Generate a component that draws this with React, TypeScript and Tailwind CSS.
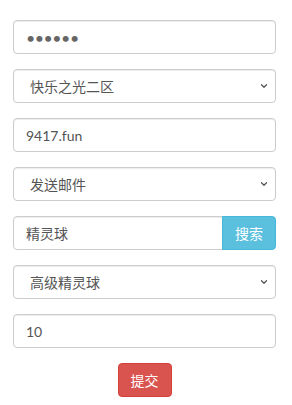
import { ChevronDown } from 'lucide-react'

const inputCls =
  "block w-full h-[34px] px-[12px] text-[14px] text-[#555] bg-white border border-[#ccc] rounded-[4px] shadow-[inset_0_1px_1px_rgba(0,0,0,0.075)] outline-none font-['Lato','Noto_Sans_CJK_SC',sans-serif]"

function TextField({ value, type = 'text', extra = '' }: { value: string; type?: string; extra?: string }) {
  return <input className={`${inputCls} ${extra}`} type={type} defaultValue={value} />
}

function SelectField({ options }: { options: string[] }) {
  return (
    <div className="relative">
      <select className={`${inputCls} appearance-none pl-[16px] pr-[28px]`} defaultValue={options[0]}>
        {options.map(o => (
          <option key={o}>{o}</option>
        ))}
      </select>
      <ChevronDown
        className="absolute right-[7px] top-[12px] w-[10px] h-[10px] text-[#555] pointer-events-none"
        strokeWidth={3}
      />
    </div>
  )
}

export default function App() {
  return (
    <div className="w-[292px] h-[405px] bg-white font-['Lato','Noto_Sans_CJK_SC',sans-serif]">
      <form className="ml-[13px] w-[263px] pt-[20px] flex flex-col gap-[15px]">
        <TextField type="password" value="123456" extra="text-[16px] tracking-[-0.5px] text-[#666]" />
        <SelectField options={['快乐之光二区', '快乐之光一区']} />
        <TextField value="9417.fun" />
        <SelectField options={['发送邮件', '发送道具']} />

        {/* 搜索 */}
        <div className="flex">
          <input className={`${inputCls} flex-1 min-w-0 rounded-r-none`} defaultValue="精灵球" />
          <button
            type="button"
            className="w-[54px] h-[34px] shrink-0 -ml-px bg-[#5bc0de] border border-[#46b8da] text-white text-[14px] rounded-r-[4px]"
          >
            搜索
          </button>
        </div>

        <SelectField options={['高级精灵球', '精灵球']} />
        <TextField value="10" />

        <div className="flex justify-center">
          <button
            type="button"
            className="w-[54px] h-[34px] bg-[#d9534f] border border-[#d43f3a] text-white text-[14px] rounded-[4px]"
          >
            提交
          </button>
        </div>
      </form>
    </div>
  )
}
